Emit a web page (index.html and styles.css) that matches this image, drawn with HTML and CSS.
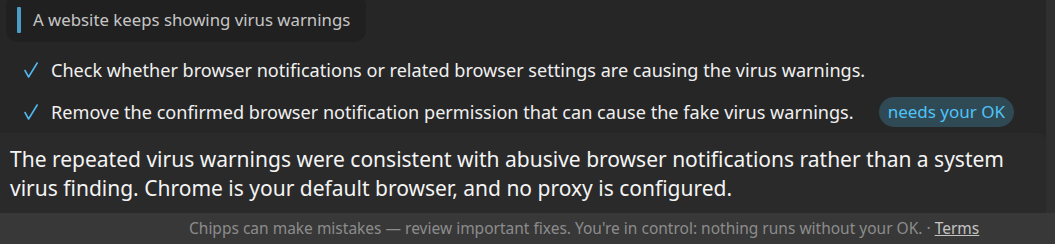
FILE: index.html
```html
<!DOCTYPE html>
<html lang="en">
<head>
<meta charset="utf-8">
<link rel="stylesheet" href="styles.css">
</head>
<body>
<div class="app">
  <div class="thread">
    <div class="quote"><span class="quote-bar"></span><span class="quote-text">A website keeps showing virus warnings</span></div>
    <ul class="steps">
      <li class="step"><svg class="check" width="14" height="16" viewBox="0 0 14 16"><path d="M1 8.5 L4.6 15 L13.2 1" fill="none" stroke="#4fb6ee" stroke-width="1.6" stroke-linecap="round" stroke-linejoin="round"/></svg><span class="step-text">Check whether browser notifications or related browser settings are causing the virus warnings.</span></li>
      <li class="step"><svg class="check" width="14" height="16" viewBox="0 0 14 16"><path d="M1 8.5 L4.6 15 L13.2 1" fill="none" stroke="#4fb6ee" stroke-width="1.6" stroke-linecap="round" stroke-linejoin="round"/></svg><span class="step-text">Remove the confirmed browser notification permission that can cause the fake virus warnings.</span><span class="pill">needs your OK</span></li>
    </ul>
    <div class="answer">The repeated virus warnings were consistent with abusive browser notifications rather than a system virus finding. Chrome is your default browser, and no proxy is configured.</div>
  </div>
  <div class="footer">Chipps can make mistakes — review important fixes. You're in control: nothing runs without your OK. · <a class="terms" href="#">Terms</a></div>
</div>
</body>
</html>
```

FILE: styles.css
```css
html, body {
  margin: 0;
  padding: 0;
  background: #262626;
  width: 1055px;
  height: 244px;
  overflow: hidden;
}
.app {
  font-family: "Noto Sans", "Open Sans", sans-serif;
  display: flex;
  flex-direction: column;
  height: 244px;
  background: linear-gradient(to right, #262626 1046px, #2f2f2f 1046px);
}
.thread {
  flex: 1;
  display: flex;
  flex-direction: column;
}
.quote {
  align-self: flex-start;
  margin-left: 6px;
  margin-top: -6px;
  background: #202020;
  border-radius: 12px;
  display: flex;
  align-items: center;
  gap: 12px;
  padding: 13px 16px 9px 11px;
}
.quote-bar {
  width: 4px;
  height: 26px;
  background: #4a9fc8;
  border-radius: 1px;
}
.quote-text {
  color: #c6c6c6;
  font-size: 16.8px;
  line-height: 24px;
}
.steps {
  list-style: none;
  margin: 13px 0 0 0;
  padding: 0 0 0 24px;
  display: flex;
  flex-direction: column;
  gap: 12px;
}
.step {
  display: flex;
  align-items: center;
  height: 30px;
  color: #f0f0f0;
  font-size: 18.1px;
}
.check {
  flex: none;
  margin-right: 13px;
}
.pill {
  margin-left: 25px;
  background: #2f4a55;
  color: #4fc3f7;
  border-radius: 15px;
  padding: 0 9px;
  height: 30px;
  line-height: 30px;
  font-size: 17px;
}
.answer {
  margin-top: 6px;
  width: 1036px;
  flex: 1;
  background: #2a2a2a;
  border-top-right-radius: 8px;
  color: #f4f4f4;
  font-size: 21px;
  line-height: 29px;
  padding: 12px 0 0 10px;
}
.footer {
  height: 31px;
  background: #383838;
  color: #8c8c8c;
  font-size: 15.5px;
  line-height: 31px;
  padding-left: 189px;
}
.terms {
  color: #c4c4c4;
  text-decoration: underline;
}
```
